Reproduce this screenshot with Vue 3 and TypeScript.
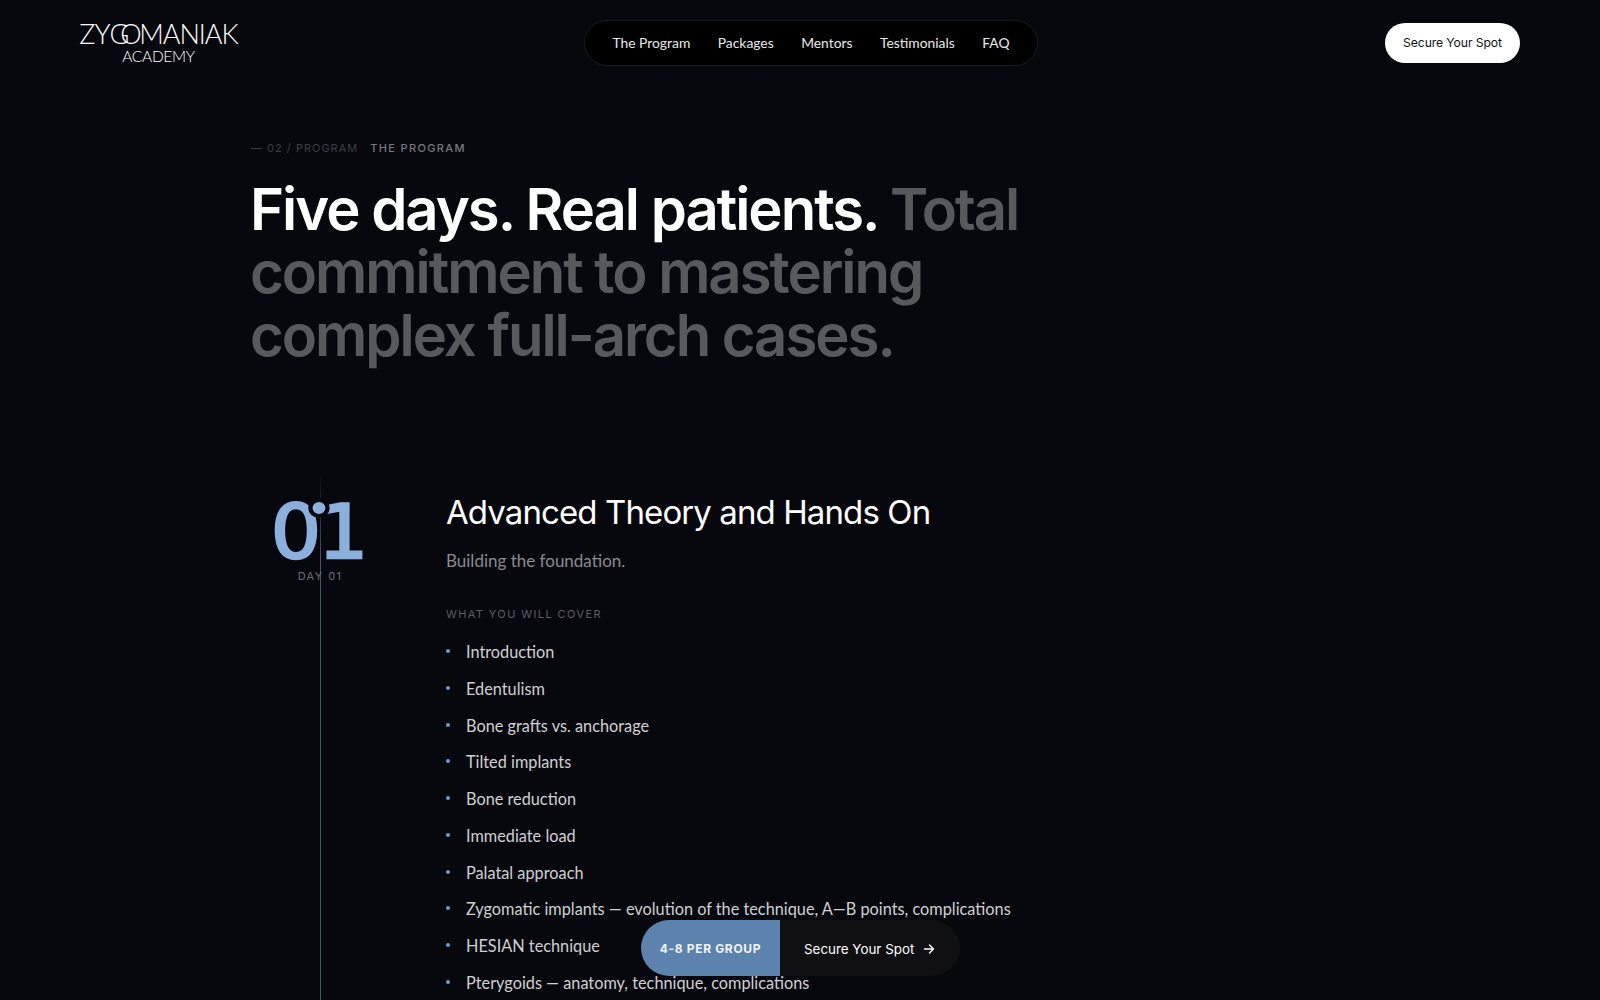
<script setup lang="ts">
const links: string[] = ['The Program', 'Packages', 'Mentors', 'Testimonials', 'FAQ']
const topics: string[] = [
  'Introduction',
  'Edentulism',
  'Bone grafts vs. anchorage',
  'Tilted implants',
  'Bone reduction',
  'Immediate load',
  'Palatal approach',
  'Zygomatic implants — evolution of the technique, A—B points, complications',
  'HESIAN technique',
  'Pterygoids — anatomy, technique, complications',
]
</script>

<template>
  <div class="page">
    <header class="header">
      <a class="logo">
        <span class="logo-main">ZY<span class="go">G</span><span class="go go-o">O</span>MANIAK</span>
        <span class="logo-sub">ACADEMY</span>
      </a>
      <nav class="nav">
        <a v-for="link in links" :key="link">{{ link }}</a>
      </nav>
      <button class="cta">Secure Your Spot</button>
    </header>

    <main class="main">
      <div class="eyebrow">
        <span class="eyebrow-dim">— 02 / PROGRAM</span>
        <span class="eyebrow-label">THE PROGRAM</span>
      </div>
      <h1 class="title">
        Five days. Real patients. <span class="muted">Total commitment to mastering complex full-arch cases.</span>
      </h1>

      <section class="day">
        <div class="line"></div>
        <div class="day-side">
          <div class="num">
            <span>0</span><span class="num-one">1</span>
            <i class="dot"></i>
          </div>
          <div class="day-label">DAY 01</div>
        </div>
        <div class="day-body">
          <h2>Advanced Theory and Hands On</h2>
          <p class="sub">Building the foundation.</p>
          <div class="cover">WHAT YOU WILL COVER</div>
          <ul class="list">
            <li v-for="t in topics" :key="t">{{ t }}</li>
          </ul>
        </div>
      </section>
    </main>

    <div class="sticky">
      <div class="sticky-count">4-8 PER GROUP</div>
      <div class="sticky-link">
        Secure Your Spot
        <svg width="12" height="12" viewBox="0 0 12 12" fill="none" stroke="#fff" stroke-width="1.4" stroke-linecap="round" stroke-linejoin="round">
          <path d="M1.5 6h9M6.5 2l4 4-4 4" />
        </svg>
      </div>
    </div>
  </div>
</template>

<style>
html, body { margin: 0; background: #07080e; overflow: hidden; }
</style>

<style scoped>
.page {
  position: relative;
  height: 1000px;
  overflow: hidden;
  background: #07080e;
  color: #fff;
  font-family: "Lato", "Inter", sans-serif;
}
.header {
  display: flex;
  align-items: center;
  justify-content: space-between;
  padding: 20px 80px 0;
  height: 46px;
}
.logo {
  display: flex;
  flex-direction: column;
  align-items: center;
  width: 157px;
  font-weight: 300;
  line-height: 1;
  margin-top: -2px;
}
.logo-main {
  font-size: 27px;
  white-space: nowrap;
  letter-spacing: -1px;
}
.go { letter-spacing: -9px; }
.go-o { letter-spacing: -2.5px; }
.logo-sub {
  font-size: 15.5px;
  margin-top: 2px;
  letter-spacing: -0.3px;
}
.nav {
  display: flex;
  gap: 27.5px;
  align-items: center;
  height: 46px;
  box-sizing: border-box;
  padding: 0 27.5px 2px;
  background: #000;
  border: 1px solid #1a1b22;
  border-radius: 23px;
  font-size: 13.85px;
  color: #e8e8ea;
}
.cta {
  width: 135px;
  height: 40px;
  border: 0;
  border-radius: 20px;
  background: #fff;
  color: #111;
  font: 400 12.2px "Inter", sans-serif;
  letter-spacing: -0.1px;
  padding: 0 0 1px;
}
.main {
  padding: 75px 0 0 250px;
}
.eyebrow {
  display: flex;
  gap: 12px;
  align-items: center;
  margin-left: 1px;
  font-family: "Inter", sans-serif;
  font-size: 11px;
  line-height: 14px;
}
.eyebrow-dim { color: #3d3e44; letter-spacing: 1px; }
.eyebrow-label { color: #77787e; letter-spacing: 1.35px; font-weight: 500; }
.title {
  margin: 23px 0 0;
  width: 800px;
  font-family: "Inter", sans-serif;
  font-size: 58px;
  line-height: 63px;
  font-weight: 600;
  letter-spacing: -2px;
}
.muted { color: rgba(255, 255, 255, 0.33); }
.day {
  position: relative;
  display: grid;
  grid-template-columns: 140px 1fr;
  column-gap: 56px;
  margin-top: 117px;
}
.line {
  position: absolute;
  left: 70px;
  top: -15px;
  width: 1px;
  height: 700px;
  background: linear-gradient(180deg, transparent 0, #46546e 90px, #46546e 100%);
}
.day-side { display: flex; flex-direction: column; align-items: center; position: relative; }
.num {
  position: relative;
  display: flex;
  margin-top: 14px;
  font-family: "DejaVu Sans", sans-serif;
  font-size: 74px;
  line-height: 68px;
  color: #8bb0dd;
  -webkit-text-stroke: 2.4px #8bb0dd;
  transform: scaleX(1.07);
}
.num-one { margin-left: -3px; }
.dot {
  position: absolute;
  left: 35px;
  top: 0;
  width: 12px;
  height: 12px;
  border-radius: 50%;
  background: #8bb0dd;
  border: 4px solid #07080e;
}
.day-label {
  margin-top: 3px;
  font-family: "Inter", sans-serif;
  font-size: 11px;
  line-height: 14px;
  letter-spacing: 1.4px;
  color: #6b6c72;
}
.day-body h2 {
  margin: 7px 0 0;
  font-family: "Inter", sans-serif;
  font-size: 33px;
  line-height: 42px;
  font-weight: 400;
  letter-spacing: -0.9px;
}
.sub {
  margin: 16px 0 0;
  font-size: 17px;
  line-height: 24px;
  color: #8a8b90;
}
.cover {
  margin-top: 34px;
  font-family: "Inter", sans-serif;
  font-size: 11px;
  line-height: 14px;
  letter-spacing: 1.4px;
  color: #5d5e64;
}
.list {
  list-style: none;
  margin: 13px 0 0;
  padding: 0;
}
.list li {
  position: relative;
  padding-left: 20px;
  height: 36.75px;
  line-height: 36.75px;
  font-size: 16.3px;
  color: #cfd0d3;
  white-space: nowrap;
}
.list li::before {
  content: "";
  position: absolute;
  left: 0;
  top: 15px;
  width: 4px;
  height: 4px;
  border-radius: 50%;
  background: #6f9bd1;
}
.sticky {
  position: absolute;
  left: 641px;
  bottom: 24px;
  display: flex;
  height: 56px;
  border-radius: 28px;
  overflow: hidden;
  font-family: "Inter", sans-serif;
}
.sticky-count {
  width: 139px;
  display: flex;
  align-items: center;
  justify-content: center;
  background: #5c82ae;
  font-size: 12px;
  font-weight: 700;
  letter-spacing: 0.65px;
  color: #f0f4f9;
}
.sticky-link {
  width: 180px;
  box-sizing: border-box;
  padding: 1px 0 0 24px;
  display: flex;
  align-items: center;
  gap: 9px;
  background: #101012;
  font-size: 13.4px;
  color: #fff;
}
</style>
